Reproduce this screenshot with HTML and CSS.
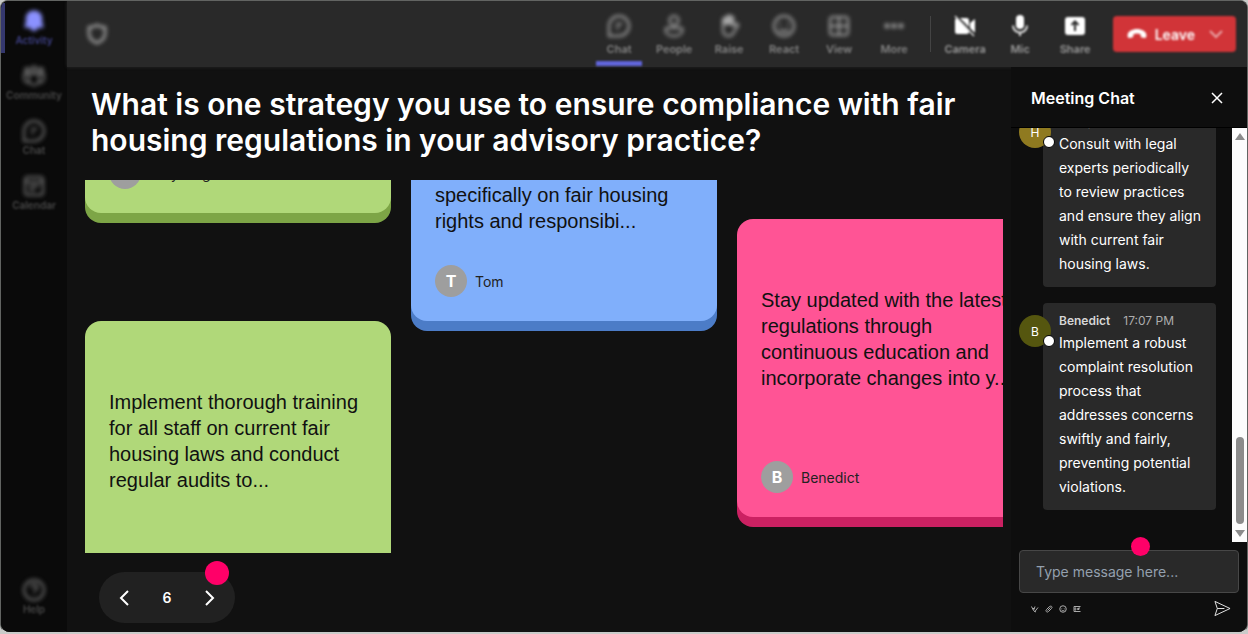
FILE: index.html
```html
<!DOCTYPE html>
<html lang="en">
<head>
<meta charset="utf-8">
<title>Meeting</title>
<link rel="stylesheet" href="styles.css">
</head>
<body>
<div class="app">
  <nav class="sidebar" aria-label="Main">
    <button class="nav-item nav-item--active" type="button">
      <svg class="icon" viewBox="0 0 24 24"><path fill="#8b91ff" d="M12 1.500c-4.600 0-8.200 3.500-8.200 8v4.300l-1.300 3.300c-.3.900.2 1.600 1 1.600h4.700c.5 2 2 3.300 3.800 3.300s3.300-1.300 3.800-3.300h4.700c.8 0 1.300-.7 1-1.600l-1.300-3.300V9.500c0-4.500-3.600-8-8.200-8z"/></svg>
      <span>Activity</span>
    </button>
    <button class="nav-item" type="button">
      <svg class="icon line" viewBox="0 0 24 24"><circle cx="5" cy="6" r="2"/><circle cx="12" cy="5" r="2.500"/><circle cx="19" cy="6" r="2"/><path d="M7 10h10v6a5 5 0 0 1-10 0zM6.500 10H2v5a4 4 0 0 0 5 3.500M17.500 10H22v5a4 4 0 0 1-5 3.500"/></svg>
      <span>Community</span>
    </button>
    <button class="nav-item" type="button">
      <svg class="icon line" viewBox="0 0 24 24"><path d="M2 22V12A10 10 0 1 1 12 22zM9 10h6M9 14h3"/></svg>
      <span>Chat</span>
    </button>
    <button class="nav-item" type="button">
      <svg class="icon line" viewBox="0 0 24 24"><rect x="3" y="3" width="18" height="18" rx="3"/><path d="M3 8h18M7 12h10M7 16h6"/></svg>
      <span>Calendar</span>
    </button>
    <button class="nav-item nav-item--help" type="button">
      <svg class="icon line" viewBox="0 0 24 24"><circle cx="12" cy="12" r="10"/><path d="M9 9.500a3 3 0 1 1 4 2.800c-.8.400-1 .8-1 1.700M12 16.500v1"/></svg>
      <span>Help</span>
    </button>
  </nav>

  <div class="main">
    <header class="topbar">
      <svg class="icon line shield" viewBox="0 0 24 24"><path stroke-width="2.500" d="M12 3c2.500 1.800 5 2.300 8 2.300v6.200c0 4.500-3 7.700-8 9.500-5-1.800-8-5-8-9.500V5.300c3 0 5.500-.5 8-2.300z"/></svg>
      <div class="tools">
        <button class="tool tool--active" type="button">
          <svg class="icon line" viewBox="0 0 24 24"><path d="M2 22V12A10 10 0 1 1 12 22zM9 10h6M9 14h3"/></svg>
          <span>Chat</span>
        </button>
        <button class="tool" type="button">
          <svg class="icon line" viewBox="0 0 24 24"><circle cx="12" cy="6.500" r="4.500"/><path d="M5 14h14c1 0 1.500.5 1.500 1.500 0 4-3.500 6.500-8.500 6.500s-8.500-2.500-8.500-6.500C3.500 14.500 4 14 5 14z"/></svg>
          <span>People</span>
        </button>
        <button class="tool" type="button">
          <svg class="icon line" viewBox="0 0 24 24"><path d="M6 12V5.500a1.300 1.300 0 0 1 2.600 0V3.800a1.300 1.300 0 0 1 2.600 0V2.600a1.300 1.300 0 0 1 2.600 0V4a1.300 1.300 0 0 1 2.600 0v8l3-2c1.300-.5 2.300.8 1.600 1.800L17 18c-1.200 2.500-3 4-5.500 4C8 22 6 19.500 6 15.500z"/><path d="M8.600 4v7M11.200 3v8M13.800 3v8" stroke-width="3"/></svg>
          <span>Raise</span>
        </button>
        <button class="tool" type="button">
          <svg class="icon line" viewBox="0 0 24 24"><circle cx="12" cy="12" r="10"/><path d="M8 9v2M16 9v2M7.500 15c2 3 7 3 9 0"/></svg>
          <span>React</span>
        </button>
        <button class="tool" type="button">
          <svg class="icon line" viewBox="0 0 24 24"><rect x="3" y="3" width="18" height="18" rx="3"/><path d="M12 3v18M3 12h18"/></svg>
          <span>View</span>
        </button>
        <button class="tool" type="button">
          <svg class="icon" viewBox="0 0 24 24" fill="#b0b0b0"><circle cx="5" cy="12" r="2.400"/><circle cx="12" cy="12" r="2.400"/><circle cx="19" cy="12" r="2.400"/></svg>
          <span>More</span>
        </button>
      </div>
      <span class="divider"></span>
      <div class="tools tools--media">
        <button class="tool" type="button">
          <svg class="icon" viewBox="0 0 24 24"><rect x="2" y="4" width="14" height="16" rx="2.500" fill="#fff"/><path fill="#fff" d="M17 9l5-4v14l-5-4z"/><path stroke="#292929" stroke-width="2" d="M3.500 2l19 19"/><path stroke="#ddd" stroke-width="1.500" d="M2 2l19 20"/></svg>
          <span>Camera</span>
        </button>
        <button class="tool" type="button">
          <svg class="icon" viewBox="0 0 24 24"><rect x="8" y="1" width="8" height="14" rx="4" fill="#fff"/><path fill="none" stroke="#ddd" stroke-width="2" d="M5 11.500a7 7 0 0 0 14 0M12 18.500V22"/></svg>
          <span>Mic</span>
        </button>
        <button class="tool" type="button">
          <svg class="icon" viewBox="0 0 24 24"><rect x="2" y="3" width="20" height="18" rx="3" fill="#fff"/><path fill="none" stroke="#292929" stroke-width="2" d="M12 17V8M8.500 11L12 7.500l3.500 3.500"/></svg>
          <span>Share</span>
        </button>
      </div>
      <div class="leave">
        <button class="leave-main" type="button">
          <svg class="leave-icon" viewBox="0 0 20 12"><path fill="#fff" d="M10 1C5.500 1 1 3.200.6 6.800c-.2 2 .3 3.400 1.600 3.200l3-.6c.8-.2 1.200-.8 1.200-1.600V6.200c2.200-.8 5-.8 7.200 0v1.600c0 .8.400 1.400 1.200 1.600l3 .6c1.300.2 1.800-1.200 1.600-3.200C19 3.200 14.500 1 10 1z"/></svg>
          Leave
        </button>
        <button class="leave-more" type="button" aria-label="Leave options">
          <svg class="chevron" viewBox="0 0 14 14"><path d="M1 4l6 6 6-6"/></svg>
        </button>
      </div>
    </header>

    <div class="body">
      <main class="stage">
        <h1 class="question">What is one strategy you use to ensure compliance with fair housing regulations in your advisory practice?</h1>
        <section class="board" aria-label="Answers">
          <div class="wall">
            <div class="column column--first">
              <article class="note note--green">
                <p class="note-text">Keep detailed records of all client interactions</p>
                <div class="author"><span class="initial">A</span>Amy Ling</div>
              </article>
              <article class="note note--green">
                <p class="note-text">Implement thorough training for all staff on current fair housing laws and conduct regular audits to...</p>
                <div class="author"><span class="initial">S</span>Sam</div>
              </article>
            </div>
            <div class="column column--second">
              <article class="note note--blue note--compact">
                <p class="note-text">Provide clients with<br>training that focuses<br>specifically on fair housing rights and responsibi...</p>
                <div class="author"><span class="initial">T</span>Tom</div>
              </article>
            </div>
            <div class="column column--third">
              <article class="note note--pink">
                <p class="note-text">Stay updated with the latest<br>regulations through<br>continuous education and incorporate changes into y...</p>
                <div class="author"><span class="initial">B</span>Benedict</div>
              </article>
            </div>
          </div>
        </section>
        <div class="pager">
          <button class="pager-btn" type="button" aria-label="Previous"><svg viewBox="0 0 16 16"><path d="M12 1L5 8l7 7"/></svg></button>
          <span class="count">6</span>
          <button class="pager-btn" type="button" aria-label="Next"><svg viewBox="0 0 16 16"><path d="M4 1l7 7-7 7"/></svg></button>
          <span class="hotspot hotspot--pager"></span>
        </div>
      </main>

      <aside class="chat">
        <header class="chat-head">
          <h2>Meeting Chat</h2>
          <button class="close" type="button" aria-label="Close"><svg viewBox="0 0 12 12"><path d="M1 1l10 10M11 1L1 11"/></svg></button>
        </header>
        <div class="chat-scroll">
          <div class="messages">
            <article class="message">
              <div class="avatar avatar--h">H<span class="status"></span></div>
              <div class="bubble">
                <div class="meta"><strong>Henry</strong><time>17:06 PM</time></div>
                <p>Consult with legal experts periodically to review practices and ensure they align with current fair housing laws.</p>
              </div>
            </article>
            <article class="message">
              <div class="avatar avatar--b">B<span class="status"></span></div>
              <div class="bubble">
                <div class="meta"><strong>Benedict</strong><time>17:07 PM</time></div>
                <p>Implement a robust complaint resolution process that addresses concerns swiftly and fairly, preventing potential violations.</p>
              </div>
            </article>
          </div>
          <div class="scrollbar">
            <span class="arrow arrow--up"></span>
            <span class="thumb"></span>
            <span class="arrow arrow--down"></span>
          </div>
        </div>
        <form class="composer">
          <input class="field" type="text" aria-label="Message" placeholder="Type message here...">
          <span class="hotspot hotspot--field"></span>
          <div class="actions">
            <button type="button" aria-label="Format"><svg viewBox="0 0 16 16"><path d="M1 3l4 8 3-8M3 7h4M7 14l7-9M6 12l4 2"/></svg></button>
            <button type="button" aria-label="Attach"><svg viewBox="0 0 16 16"><path d="M5 11l6-6M3 9l5-5c4-4 8 0 5 3l-6 6c-3 3-7-1-4-4z"/></svg></button>
            <button type="button" aria-label="Emoji"><svg viewBox="0 0 16 16"><circle cx="8" cy="8" r="6.500"/><path d="M5.500 6v1M10.500 6v1M5 10c2 2 4 2 6 0"/></svg></button>
            <button type="button" aria-label="GIF"><svg viewBox="0 0 16 16"><path d="M15 3H2v10h13M6 6H4v4h2M8.500 6v4M11 10V6h3M11 8h2"/></svg></button>
            <button class="send" type="button" aria-label="Send"><svg viewBox="0 0 18 18"><path d="M1 1.500L17 9 1 16.500 3.500 9zM3.500 9H11"/></svg></button>
          </div>
        </form>
      </aside>
    </div>
  </div>
</div>
</body>
</html>
```

FILE: styles.css
```css
* { box-sizing: border-box; }
body {
  margin: 0;
  background: #c9cbc9;
  color: #fff;
  font-family: Inter, "Liberation Sans", sans-serif;
}
h1, h2, p { margin: 0; }
button {
  border: 0;
  padding: 0;
  background: none;
  color: inherit;
  font: inherit;
}
svg { display: block; }

.app {
  display: flex;
  height: 100vh;
  border: 1px solid #626462;
  border-bottom: 2px solid #c9cbc9;
  border-radius: 8px 8px 10px 10px;
  overflow: hidden;
  background: #111;
}

/* Left rail, out of focus */
.sidebar {
  display: flex;
  flex-direction: column;
  flex: none;
  width: 66px;
  padding: 8px 0 16px;
  background: #0a0a0a;
}
.nav-item {
  display: flex;
  flex-direction: column;
  align-items: center;
  height: 55px;
  color: #707070;
  font-size: 10px;
  line-height: 14px;
}
.sidebar .icon, .topbar .icon { filter: blur(2px); }
.nav-item span, .tool span { font-weight: 600; filter: blur(1px); }
.nav-item span { opacity: 0.6; }
.tool span { opacity: 0.7; }
.nav-item--active {
  color: #6064d8;
  margin-top: -6px;
  padding-top: 6px;
  border-left: 4px solid #35386e;
  padding-right: 4px;
  height: 50px;
  margin-bottom: 11px;
}
.nav-item--help { margin-top: auto; height: 38px; }
.icon { flex: none; width: 24px; height: 24px; }
.line { fill: none; stroke: currentColor; stroke-width: 2; }

/* Top bar, out of focus */
.main {
  display: flex;
  flex-direction: column;
  flex: 1;
  min-width: 0;
}
.topbar {
  display: flex;
  align-items: center;
  flex: none;
  height: 66px;
  padding: 0 11px 0 18px;
  background: #292929;
  box-shadow: 0 0 3px #292929;
}
.shield { color: #a8a8a8; margin-right: auto; }
.tools { display: flex; height: 66px; }
.tool {
  display: flex;
  flex-direction: column;
  align-items: center;
  width: 55px;
  padding-top: 13px;
  color: #a8a8a8;
  font-size: 11px;
  line-height: 24px;
}
.tools .icon { margin-bottom: -1px; }
.tool--active::after {
  content: "";
  flex: none;
  width: 46px;
  height: 5px;
  background: #6165dc;
  filter: blur(1px);
}
.tools--media .tool { color: #c8c8c8; }
.tools--media .icon { filter: blur(1px); }
.divider { width: 1px; height: 36px; margin: 0 7px 0 8px; background: #444; }
.leave {
  display: flex;
  height: 36px;
  margin-left: 10px;
  border-radius: 4px;
  background: #d13438;
  filter: blur(1px);
}
.leave-main {
  display: flex;
  align-items: center;
  gap: 8px;
  padding: 0 14px;
  font-size: 14px;
  font-weight: 600;
}
.leave-icon { width: 20px; height: 12px; }
.leave-more { width: 27px; }
.chevron { width: 14px; height: 14px; fill: none; stroke: #e9a3a5; stroke-width: 2; }

/* Question and wall */
.body { display: flex; flex: 1; min-height: 0; }
.stage {
  display: flex;
  flex-direction: column;
  align-items: flex-start;
  flex: 1;
  min-width: 0;
  padding: 19px 8px 9px 18px;
}
.question {
  padding-left: 6px;
  font-size: 30px;
  font-weight: 600;
  line-height: 36px;
}
.board {
  flex: 1;
  align-self: stretch;
  min-height: 0;
  margin: 22px 0 19px;
  overflow: hidden;
}
.wall { display: flex; gap: 20px; margin-top: -266px; }
.column { display: flex; flex-direction: column; gap: 98px; flex: none; width: 306px; }
.column--first { padding-top: 1px; }
.column--second { padding-top: 187px; }
.column--third { padding-top: 305px; }
.note {
  display: flex;
  flex-direction: column;
  gap: 26px;
  min-height: 298px;
  padding: 24px;
  border-radius: 16px;
  margin-bottom: 10px;
  color: #111;
}
.column .note:last-child { margin-bottom: 0; }
.note--compact { min-height: 220px; }
.note--green { background: #b0d879; box-shadow: 0 10px #7da546; }
.note--blue { background: #80affb; box-shadow: 0 10px #4c7cc7; }
.note--pink { background: #ff5495; box-shadow: 0 10px #cb2162; }
.note-text {
  flex: 1;
  align-content: center;
  font-family: "Liberation Sans", Arial, sans-serif;
  font-size: 20px;
  line-height: 26px;
}
.author { display: flex; align-items: center; gap: 8px; font-size: 14px; color: #222; }
.initial {
  display: grid;
  place-items: center;
  width: 32px;
  height: 32px;
  border-radius: 50%;
  background: #9e9e9e;
  color: #fff;
  font-size: 16px;
  font-weight: 700;
}
.pager {
  position: relative;
  display: flex;
  align-items: center;
  justify-content: space-between;
  width: 136px;
  height: 51px;
  margin-left: 14px;
  padding: 0 17px;
  border-radius: 26px;
  background: #212121;
}
.pager-btn svg { width: 16px; height: 16px; fill: none; stroke: #fff; stroke-width: 2; }
.count { font-size: 14px; font-weight: 600; }
.hotspot { position: absolute; border-radius: 50%; background: #ff0068; }
.hotspot--pager { top: -11px; right: 6px; width: 24px; height: 24px; }

/* Chat panel */
.chat {
  display: flex;
  flex-direction: column;
  flex: none;
  width: 236px;
  background: #0e0e0e;
}
.chat-head {
  display: flex;
  align-items: center;
  justify-content: space-between;
  flex: none;
  height: 61px;
  padding: 2px 24px 0 20px;
  border-bottom: 1px solid #000;
}
.chat-head h2 { font-size: 16px; font-weight: 600; }
.close svg { width: 12px; height: 12px; fill: none; stroke: #fff; stroke-width: 1.500; }
.chat-scroll { display: flex; flex: 1; min-height: 0; }
.messages {
  display: flex;
  flex-direction: column;
  justify-content: flex-end;
  gap: 16px;
  flex: 1;
  padding: 0 16px 32px 8px;
  overflow: hidden;
}
.message { display: flex; flex: none; }
.avatar {
  position: relative;
  display: grid;
  place-items: center;
  flex: none;
  width: 32px;
  height: 32px;
  margin: 12px -8px 0 0;
  border-radius: 50%;
  font-size: 12px;
}
.avatar--h { background: #8f7a20; }
.avatar--b { background: #55560f; }
.status {
  position: absolute;
  right: -4px;
  bottom: 0;
  width: 12px;
  height: 12px;
  border: 1px solid #000;
  border-radius: 50%;
  background: #fff;
}
.bubble {
  flex: 1;
  min-width: 0;
  padding: 8px 12px 11px 16px;
  border-radius: 4px;
  background: #292929;
  font-size: 14px;
  line-height: 24px;
}
.meta { display: flex; gap: 13px; font-size: 12px; line-height: 20px; }
.meta strong { font-weight: 600; color: #d6d6d6; }
.meta time { color: #adadad; }
.scrollbar {
  display: flex;
  flex-direction: column;
  align-items: center;
  flex: none;
  width: 15px;
  padding: 5px 0;
  background: #fcfcfc;
}
.arrow { border: 5px solid transparent; }
.arrow--up { border-top: 0; border-bottom: 7px solid #8b8b8b; }
.arrow--down { border-bottom: 0; border-top: 7px solid #8b8b8b; }
.thumb { width: 8px; height: 87px; margin: auto 0 6px; border-radius: 4px; background: #8b8b8b; }
.composer { position: relative; padding: 8px 8px 15px; }
.field {
  display: block;
  width: 100%;
  height: 43px;
  padding: 0 16px;
  border: 1px solid #474747;
  border-radius: 4px;
  background: #292929;
  color: #fff;
  font: inherit;
  font-size: 14px;
}
.field::placeholder { color: #94a0ae; }
.hotspot--field { top: -5px; right: 97px; width: 19px; height: 19px; }
.actions { display: flex; align-items: center; gap: 6px; padding: 7px 8px 0 12px; }
.actions svg { width: 8px; height: 8px; fill: none; stroke: #aaa; stroke-width: 2; }
.actions .send { margin-left: auto; }
.actions .send svg { width: 17px; height: 17px; stroke: #eee; stroke-width: 1; }
```
